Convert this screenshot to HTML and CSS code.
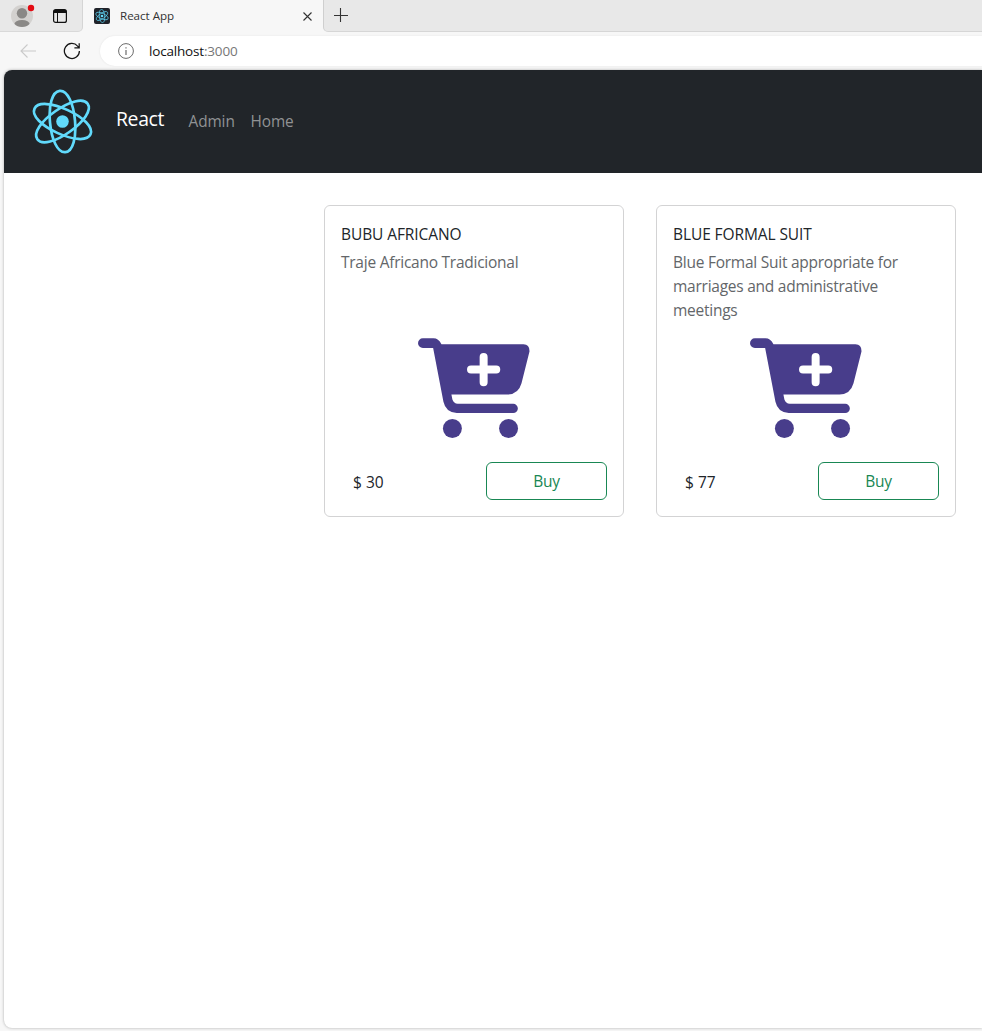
FILE: index.html
```html
<!DOCTYPE html>
<html lang="en">
<head>
<meta charset="utf-8">
<title>React App</title>
<link rel="stylesheet" href="styles.css">
</head>
<body>
<svg class="defs" width="0" height="0">
  <defs>
    <path id="ring" d="M-91 0C-91 -23 -50 -37 0 -37S91 -23 91 0S50 37 0 37S-91 23 -91 0Z"/>
    <symbol id="atom" viewBox="-96 -96 192 192">
      <circle r="18.500" fill="#61dafb"/>
      <g class="rings">
        <use href="#ring" transform="rotate(84.8)"/>
        <use href="#ring" transform="rotate(24.8)"/>
        <use href="#ring" transform="rotate(144.8)"/>
      </g>
    </symbol>
    <symbol id="cart" viewBox="54 38 336 301">
      <path fill="#483d8b" d="M68 39H100Q115 39 124 57H371Q390 58 389 79L365 174Q356 207 323 208H154L157 223Q161 235 173 236H340A14 14 0 0 1 340 264H170Q137 262 130 230L99 68H68A14 14 0 0 1 68 39Z"/>
      <path d="M251 95V171M213 133H289" stroke="#fff" stroke-width="24" stroke-linecap="round"/>
      <circle cx="157" cy="310.500" r="28.500" fill="#483d8b"/>
      <circle cx="326" cy="310.500" r="28.500" fill="#483d8b"/>
    </symbol>
  </defs>
</svg>
<div class="browser">
  <div class="tabstrip">
    <div class="controls">
      <svg class="avatar" viewBox="0 0 26 26">
        <defs><clipPath id="head"><circle cx="12" cy="13" r="11"/></clipPath></defs>
        <circle cx="12" cy="13" r="11" fill="#d3d1cf"/>
        <g clip-path="url(#head)" fill="#8a8886"><circle cx="12" cy="10.300" r="5.200"/><ellipse cx="12" cy="21.500" rx="7.800" ry="4.600"/></g>
        <circle cx="21" cy="5" r="3.200" fill="#e30b13"/>
      </svg>
      <svg class="workspaces" viewBox="0 0 14 14">
        <rect x=".6" y=".6" width="12.800" height="12.800" rx="2" fill="none" stroke="#111" stroke-width="1.200"/>
        <path d="M4.500 4V13" stroke="#111"/><path d="M1 2.500H13" stroke="#111" stroke-width="3"/>
      </svg>
    </div>
    <div class="tab">
      <span class="favicon"><svg viewBox="0 0 14 14"><use href="#atom"/></svg></span>
      <span class="tab-title">React App</span>
      <svg class="close" viewBox="0 0 9 9"><path d="M.5.5L8.500 8.500M8.500.5L.5 8.500" stroke="#333" stroke-width="1.100"/></svg>
    </div>
    <div class="tab-rest">
      <svg class="plus" viewBox="0 0 14 14"><path d="M6.500 0V14M0 7.500H14" stroke="#333" stroke-width="1.100"/></svg>
    </div>
  </div>
  <div class="toolbar">
    <svg class="back" viewBox="0 0 16 14"><path d="M16 7H1M7.500.5L1 7L7.500 13.500" fill="none" stroke="#cacaca" stroke-width="1.100"/></svg>
    <svg class="reload" viewBox="0 0 18 18"><path d="M16.400 9A7.500 7.500 0 1 1 14.600 4.100L16 5.600M16.200 1.200V5.800H11.400" fill="none" stroke="#151515" stroke-width="1.250"/></svg>
    <div class="address">
      <svg class="info" viewBox="0 0 16 16"><circle cx="8" cy="8" r="7.400" fill="none" stroke="#6b6b6b"/><path d="M8 7V12M8 4.200V5.600" stroke="#6b6b6b" stroke-width="1.200"/></svg>
      <span class="url">localhost<span class="port">:3000</span></span>
    </div>
  </div>
  <div class="page">
    <nav class="navbar">
      <svg class="logo"><use href="#atom"/></svg>
      <span class="brand">React</span>
      <span class="link admin">Admin</span>
      <span class="link home">Home</span>
    </nav>
    <main class="products">
      <article class="card">
        <h2 class="title">BUBU AFRICANO</h2>
        <p class="text">Traje Africano Tradicional</p>
        <svg class="cart"><use href="#cart"/></svg>
        <div class="buy-row"><span class="price">$ 30</span><button class="buy">Buy</button></div>
      </article>
      <article class="card">
        <h2 class="title">BLUE FORMAL SUIT</h2>
        <p class="text">Blue Formal Suit appropriate for<br>marriages and administrative<br>meetings</p>
        <svg class="cart"><use href="#cart"/></svg>
        <div class="buy-row"><span class="price">$ 77</span><button class="buy">Buy</button></div>
      </article>
    </main>
  </div>
</div>
</body>
</html>
```
FILE: styles.css
```css
* { box-sizing: border-box; }
body { margin: 0; font-family: "Segoe UI", "Open Sans", "Noto Sans", sans-serif; color: #212529; overflow: hidden; }
svg { display: block; flex: none; }
.defs { position: absolute; }
.rings { fill: none; stroke: #61dafb; stroke-width: var(--ring, 8px); }
.browser { height: 1031px; display: flex; flex-direction: column; background: #f7f7f7; overflow: hidden; }
.tabstrip { height: 32px; flex: none; display: flex; background: #f7f7f7; }
.controls { width: 83px; display: flex; align-items: center; padding-left: 10px; background: #e8e8e8; border-bottom: 1px solid #d9d9d9; border-right: 1px solid #d5d5d5; border-bottom-right-radius: 5px; }
.avatar { width: 26px; height: 26px; margin-top: 1px; }
.workspaces { width: 14px; height: 14px; margin: 1px 0 0 17px; }
.tab { width: 240px; display: flex; align-items: center; padding: 0 11px; background: #f7f7f7; border-radius: 6px 6px 0 0; }
.favicon { width: 16px; height: 16px; padding: 1px; border-radius: 2px; background: #20232a; --ring: 10px; }
.favicon svg { width: 14px; height: 14px; }
.tab-title { margin-left: 10px; font-size: 11.600px; line-height: 16px; color: #333; white-space: nowrap; letter-spacing: -.03px; }
.close { width: 9px; height: 9px; margin-left: auto; }
.tab-rest { flex: 1; background: #e8e8e8; border-left: 1px solid #cfcfcf; border-bottom: 1px solid #d6d6d6; border-bottom-left-radius: 5px; padding: 8px 0 0 10px; }
.plus { width: 14px; height: 14px; }
.toolbar { height: 38px; flex: none; display: flex; align-items: center; padding-left: 20px; }
.back { width: 16px; height: 14px; }
.reload { width: 18px; height: 18px; margin-left: 27px; }
.address { flex: 1; height: 30px; margin-left: 19px; padding-left: 18px; display: flex; align-items: center; background: #fff; border-radius: 15px 0 0 15px; box-shadow: 0 0 2px #e2e2e2; }
.info { width: 16px; height: 16px; }
.url { margin-left: 15px; font-size: 13.500px; line-height: 20px; letter-spacing: -.18px; color: #111; }
.port { color: #777; }
.page { flex: none; height: 958px; margin-left: 4px; background: #fff; border-radius: 8px 0 0 8px; overflow: hidden; box-shadow: 0 0 3px #aaa; }
.navbar { height: 103px; display: flex; align-items: center; padding-left: 26px; background: #212529; }
.logo { width: 65px; height: 65px; }
.brand { margin: -6px 0 0 21px; width: 72.500px; font-size: 19.400px; line-height: 30px; color: #fff; letter-spacing: -.35px; }
.link { margin-top: 1px; font-size: 15.400px; line-height: 24px; color: #909294; letter-spacing: -.1px; }
.admin { width: 62px; }
.products { display: flex; gap: 32px; padding: 32px 0 0 320px; }
.card { width: 300px; height: 312px; flex: none; display: flex; flex-direction: column; padding: 16px; border: 1px solid #d3d3d4; border-radius: 6px; }
.title { margin: 2px 0 6px; font-size: 15.500px; font-weight: 400; line-height: 20px; letter-spacing: -.09px; }
.text { margin: 0; height: 88px; font-size: 15.500px; line-height: 24px; letter-spacing: -.25px; color: #636669; white-space: nowrap; }
.cart { width: 112px; height: 100px; margin-left: 77px; }
.buy-row { display: flex; justify-content: space-between; align-items: center; margin-top: 24px; }
.price { margin: 2px 0 0 12px; font-size: 15.500px; line-height: 24px; }
.buy { width: 121px; height: 38px; padding: 0; font: inherit; font-size: 15.500px; letter-spacing: -.2px; color: #198754; background: #fff; border: 1px solid #198754; border-radius: 6px; }
```
